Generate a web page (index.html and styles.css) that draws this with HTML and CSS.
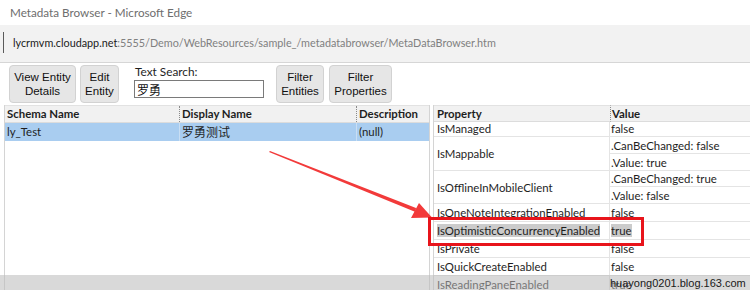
FILE: index.html
```html
<!DOCTYPE html>
<html lang="en">
<head>
    <meta charset="UTF-8">
    <title>Metadata Browser</title>
    <link rel="stylesheet" href="styles.css">
</head>
<body>
<div class="window">
    <div class="titlebar">Metadata Browser - Microsoft Edge</div>
    <div class="addressbar">
        <div class="url"><span class="host">lycrmvm.cloudapp.net</span>:5555/Demo/WebResources/sample_/metadatabrowser/MetaDataBrowser.htm</div>
    </div>

    <div class="toolbar">
        <button class="btn btn-view">View Entity<br>Details</button>
        <button class="btn btn-edit">Edit<br>Entity</button>
        <div class="search">
            <label for="search">Text Search:</label>
            <input id="search" type="text" value="罗勇">
        </div>
        <button class="btn btn-entities">Filter<br>Entities</button>
        <button class="btn btn-props">Filter<br>Properties</button>
    </div>

    <div class="panes">
        <div class="entities">
            <div class="erow ehead">
                <div class="ecell c-schema">Schema Name</div>
                <div class="ecell c-display">Display Name</div>
                <div class="ecell c-desc">Description</div>
            </div>
            <div class="erow selected">
                <div class="ecell c-schema">ly_Test</div>
                <div class="ecell c-display cjk">罗勇测试</div>
                <div class="ecell c-desc">(null)</div>
            </div>
        </div>

        <div class="properties">
            <div class="pcell phead">Property</div>
            <div class="pcell phead pval">Value</div>

            <div class="pcell pname first">IsManaged</div>
            <div class="pcell pval first">false</div>

            <div class="pcell pname span2">IsMappable</div>
            <div class="pcell pval sub">.CanBeChanged: false</div>
            <div class="pcell pval">.Value: true</div>

            <div class="pcell pname span2">IsOfflineInMobileClient</div>
            <div class="pcell pval sub">.CanBeChanged: true</div>
            <div class="pcell pval">.Value: false</div>

            <div class="pcell pname">IsOneNoteIntegrationEnabled</div>
            <div class="pcell pval">false</div>

            <div class="pcell pname"><span class="picked">IsOptimisticConcurrencyEnabled</span></div>
            <div class="pcell pval"><span class="picked">true</span></div>

            <div class="pcell pname">IsPrivate</div>
            <div class="pcell pval">false</div>

            <div class="pcell pname">IsQuickCreateEnabled</div>
            <div class="pcell pval">false</div>

            <div class="pcell pname">IsReadingPaneEnabled</div>
            <div class="pcell pval">true</div>
        </div>
    </div>

    <div class="band"><span class="watermark">huayong0201.blog.163.com</span></div>

    <svg class="marks" width="750" height="290" viewBox="0 0 750 290">
        <polygon points="269,152 270,151 416,208 415.5,212" fill="#f23a3a"/>
        <polygon points="432,217.5 411,218 419,203" fill="#f23a3a"/>
        <rect x="429.5" y="218.5" width="213" height="26" fill="none" stroke="#e8141b" stroke-width="3"/>
    </svg>
</div>
</body>
</html>
```

FILE: styles.css
```css
body {
    margin: 0;
    background-color: #ffffff;
}
.window {
    position: relative;
    width: 750px;
    height: 290px;
    overflow: hidden;
    font-family: 'Lato', 'Noto Sans CJK SC', sans-serif;
    font-size: 11.4px;
    color: #1e1e1e;
}
.cjk {
    font-family: 'Noto Sans CJK SC', sans-serif;
    font-size: 12px;
}
.titlebar {
    height: 25px;
    line-height: 25px;
    padding-left: 10px;
    font-size: 11.7px;
    color: #6e6e6e;
}
.addressbar {
    background-color: #f2f2f2;
    border-bottom: 1px solid #d6d6d6;
    padding-top: 7px;
    box-sizing: border-box;
    height: 38px;
}
.url {
    margin-left: 3px;
    border-left: 1px solid #5a5a5a;
    height: 21px;
    line-height: 21px;
    padding-left: 9px;
    color: #808080;
    font-size: 10.8px;
}
.host {
    color: #1a1a1a;
}

/* toolbar */
.toolbar {
    display: flex;
    align-items: flex-start;
    padding: 2px 0 0 9px;
    height: 42px;
    box-sizing: border-box;
}
.btn {
    height: 38px;
    margin: 0;
    padding: 0;
    background-color: #e6e6e6;
    border: 1px solid #d2d2d2;
    border-radius: 4px;
    font-family: 'Liberation Sans', Arial, sans-serif;
    font-size: 11.5px;
    line-height: 14px;
    color: #111;
    cursor: pointer;
}
.btn-view { width: 67px; }
.btn-edit { width: 39px; margin-left: 4px; }
.btn-entities { width: 48px; margin-left: 12px; }
.btn-props { width: 63px; margin-left: 5px; }
.search {
    display: flex;
    flex-direction: column;
    margin-left: 15px;
    width: 130px;
}
.search label {
    line-height: 13px;
    margin-left: 1px;
    font-size: 11.8px;
    color: #1e1e1e;
}
.search input {
    margin: 2px 0 0 0;
    height: 18px;
    box-sizing: border-box;
    border: 1px solid #7a7a7a;
    padding: 0 2px;
    font-family: 'Noto Sans CJK SC', sans-serif;
    font-size: 12px;
    color: #111;
}

/* panes */
.panes {
    display: flex;
    height: 185px;
}
.entities {
    margin-left: 4px;
    width: 426px;
    border-left: 1px solid #d4d4d4;
    border-right: 1px solid #d4d4d4;
    box-sizing: border-box;
}
.erow {
    display: flex;
    height: 18px;
    line-height: 18px;
}
.ehead {
    background-color: #f1f1f1;
    border-top: 1px solid #e2e2e2;
    border-bottom: 1px solid #dcdcdc;
    font-weight: 700;
    box-sizing: border-box;
    line-height: 16px;
}
.selected {
    background-color: #a9cdf0;
}
.ecell {
    padding-left: 2px;
    box-sizing: border-box;
    white-space: nowrap;
    overflow: hidden;
}
.c-schema { width: 174px; }
.c-display { width: 177px; }
.c-desc { width: 73px; }
.ehead .c-display,
.ehead .c-desc {
    border-left: 1px dotted #8a8a8a;
}
.selected .c-display,
.selected .c-desc {
    border-left: 1px solid #c9def3;
}

.properties {
    margin-left: 3px;
    flex: 1;
    border-left: 1px solid #d4d4d4;
    display: grid;
    grid-template-columns: 176px 1fr;
    grid-template-rows: 17px 15px 17px 17px 16px 17px 18px 18px 18px 18px 18px;
    align-content: start;
}
.pcell {
    border-bottom: 1px solid #e4e4e4;
    box-sizing: border-box;
    padding-left: 3px;
    display: flex;
    align-items: center;
    white-space: nowrap;
}
.pname {
    border-right: 1px solid #e4e4e4;
}
.pval {
    padding-left: 1px;
}
.phead {
    background-color: #f1f1f1;
    border-top: 1px solid #e2e2e2;
    border-bottom: 1px solid #dcdcdc;
    font-weight: 700;
}
.phead.pval {
    border-left: 1px dotted #8a8a8a;
}
.first {
    align-items: flex-start;
    line-height: 13px;
}
.span2 {
    grid-row: span 2;
}
.picked {
    background-color: #cbcbcb;
}

/* overlays */
.band {
    position: absolute;
    left: 0;
    top: 275px;
    width: 750px;
    height: 15px;
    background-color: rgba(186, 186, 186, 0.55);
}
.watermark {
    position: absolute;
    left: 610px;
    top: 0;
    line-height: 16px;
    font-family: 'Liberation Sans', Arial, sans-serif;
    font-size: 11px;
    color: #1a1a1a;
}
.marks {
    position: absolute;
    left: 0;
    top: 0;
}
```
